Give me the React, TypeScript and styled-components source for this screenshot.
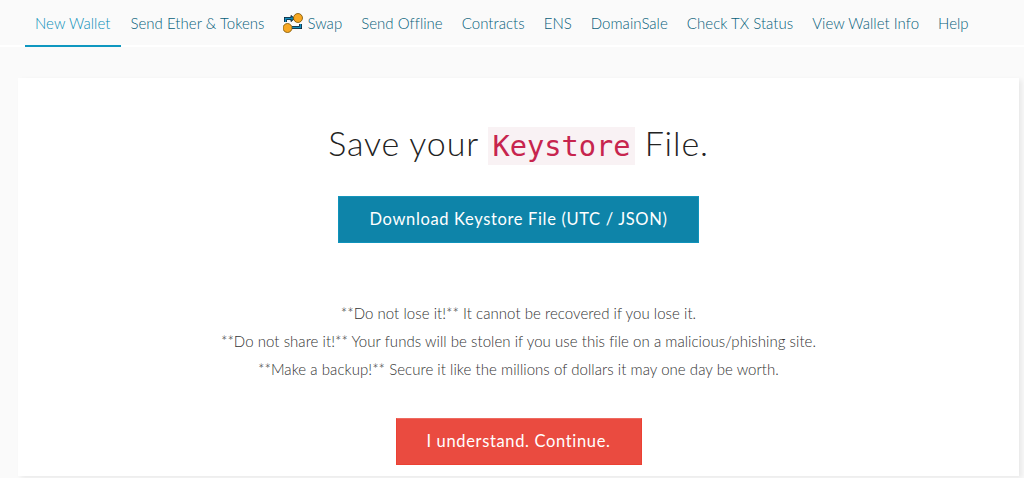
import React from "react";
import styled, { createGlobalStyle } from "styled-components";

const Global = createGlobalStyle`
  html, body { margin: 0; padding: 0; background: #fafafa; height: 100%; overflow: hidden; }
  body { font-family: Lato, "Liberation Sans", sans-serif; font-weight: 300; color: #333; }
`;

const Page = styled.div`
  height: 478px;
  overflow: hidden;
  display: flex;
  flex-direction: column;
`;

const Nav = styled.nav`
  height: 47px;
  padding: 0 0 0 25px;
  box-sizing: border-box;
  display: flex;
  border-bottom: 2px solid #fff;
`;

const NavItem = styled.a<{ $active?: boolean }>`
  display: flex;
  align-items: center;
  gap: 4px;
  height: 47px;
  box-sizing: border-box;
  padding: 0 9.5px 0 ${(p) => (p.$active ? "10px" : "9.5px")};
  min-width: ${(p) => (p.$active ? "96px" : "0")};
  font-size: 15px;
  letter-spacing: 0.03px;
  font-weight: 300;
  white-space: nowrap;
  color: ${(p) => (p.$active ? "#0a8fb8" : "#075f7a")};
  border-bottom: 2px solid ${(p) => (p.$active ? "#0e97c0" : "transparent")};
`;

const Card = styled.main`
  margin: 31px 5px 0 18px;
  height: 398px;
  box-sizing: border-box;
  background: #fff;
  display: flex;
  flex-direction: column;
  align-items: center;
  padding-top: 42px;
  box-shadow: 3px 2px 5px rgba(0, 0, 0, 0.07);
`;

const Title = styled.h1`
  margin: 0;
  font-size: 34px;
  line-height: 46px;
  font-weight: 300;
  letter-spacing: 0.85px;
  color: #222;
  white-space: pre;
`;

const Code = styled.code`
  font-family: "DejaVu Sans Mono", monospace;
  font-size: 28.7px;
  font-weight: 400;
  letter-spacing: 0;
  color: #c7254e;
  background: #f9f2f4;
  padding: 2px 4px;
`;

const Btn = styled.button<{ $kind: "primary" | "danger" }>`
  font-family: Lato, sans-serif;
  font-size: 16.5px;
  font-weight: 400;
  letter-spacing: 0.65px;
  color: #fff;
  height: 47px;
  padding: 0 0 2px;
  border-radius: 0;
  box-sizing: border-box;
  background: ${(p) => (p.$kind === "primary" ? "#0e84a9" : "#ea4b40")};
  border: 1px solid ${(p) => (p.$kind === "primary" ? "#0f93bb" : "#ec4133")};
  border-top-color: ${(p) => (p.$kind === "primary" ? "#1595bb" : "#ee6a60")};
`;

const DownloadBtn = styled(Btn)`
  width: 361px;
  margin-top: 27px;
`;

const ContinueBtn = styled(Btn)`
  width: 246px;
  margin-top: 35px;
`;

const Notes = styled.div`
  margin-top: 56px;
  display: flex;
  flex-direction: column;
  align-items: center;
`;

const Note = styled.p`
  margin: 0;
  font-size: 15px;
  line-height: 28px;
  font-weight: 300;
  letter-spacing: 0.05px;
  color: #333;
`;

const SwapIcon = () => (
  <svg width="20" height="20" viewBox="0 0 20 20">
    <path d="M2.500 9V5.500H10" fill="none" stroke="#123" strokeWidth="3" />
    <path d="M8 2.500l3.500 3-3.500 3z" fill="#0e84a9" stroke="#123" strokeWidth="1" />
    <path d="M2.500 9V5.500H9" fill="none" stroke="#1590c0" strokeWidth="1.500" />
    <path d="M17.500 11v3.500H9" fill="none" stroke="#123" strokeWidth="3" />
    <path d="M17.500 11v3.500H9" fill="none" stroke="#1590c0" strokeWidth="1.500" />
    <circle cx="15" cy="5" r="4.500" fill="#f7a823" stroke="#7a5200" strokeWidth="0.800" />
    <circle cx="4.500" cy="15" r="4.500" fill="#f7a823" stroke="#7a5200" strokeWidth="0.800" />
  </svg>
);

const items = ["Send Ether & Tokens"];
const rest = ["Send Offline", "Contracts", "ENS", "DomainSale", "Check TX Status", "View Wallet Info", "Help"];

export default function App() {
  return (
    <Page>
      <Global />
      <Nav>
        <NavItem $active>New Wallet</NavItem>
        {items.map((t) => (
          <NavItem key={t}>{t}</NavItem>
        ))}
        <NavItem>
          <SwapIcon />
          Swap
        </NavItem>
        {rest.map((t) => (
          <NavItem key={t}>{t}</NavItem>
        ))}
      </Nav>
      <Card>
        <Title>
          Save your <Code>Keystore</Code> File.
        </Title>
        <DownloadBtn $kind="primary">Download Keystore File (UTC / JSON)</DownloadBtn>
        <Notes>
          <Note>**Do not lose it!** It cannot be recovered if you lose it.</Note>
          <Note>**Do not share it!** Your funds will be stolen if you use this file on a malicious/phishing site.</Note>
          <Note>**Make a backup!** Secure it like the millions of dollars it may one day be worth.</Note>
        </Notes>
        <ContinueBtn $kind="danger">I understand. Continue.</ContinueBtn>
      </Card>
    </Page>
  );
}
